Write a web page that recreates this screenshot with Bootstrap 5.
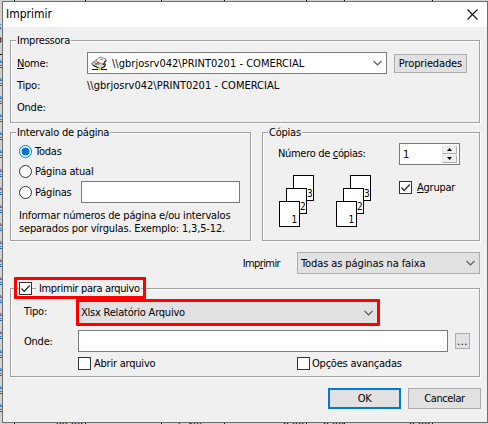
<!DOCTYPE html>
<html lang="pt-BR">
<head>
    <meta charset="UTF-8" />
    <meta name="viewport" content="width=device-width, initial-scale=1.0"/>
    <title>Imprimir</title>
    <link href="https://cdn.jsdelivr.net/npm/bootstrap@5.3.0/dist/css/bootstrap.min.css" rel="stylesheet"/>
    <style>
        body {
            width: 488px;
            height: 424px;
            background: #d2d2d2;
            color: #000;
            font-family: "DejaVu Sans Condensed", "DejaVu Sans", sans-serif;
            font-stretch: condensed;
            font-size: 11px;
            line-height: 13px;
            letter-spacing: -0.22px;
            white-space: nowrap;
        }

        u { text-underline-offset: 1px; }

        /* spreadsheet behind the dialog */
        .sheet-lines { inset: 0; }

        .sheet-rows {
            left: -4px;
            top: 54px;
            width: 8px;
            color: #0f62b0;
            line-height: 18.1px;
        }

        .sheet-head {
            left: -4px;
            top: 20px;
            width: 8px;
            height: 35px;
            border-bottom: 1px solid #000;
        }

        .sheet-values {
            left: 0;
            top: 420px;
            width: 432px;
        }

        .sheet-values span { text-align: right; }
        .col-a { width: 83px; }
        .col-b { width: 122px; }
        .col-c { width: 99px; }
        .col-d { width: 40px; }
        .col-e { width: 86px; }

        .dialog-window {
            left: 2px;
            top: 1px;
            width: 486px;
            height: 422px;
            background: #f0f0f0;
            border: 1px solid #6e6e6e;
        }

        .title-bar {
            height: 25px;
            padding: 0 9px 0 3px;
            background: #fff;
            font-size: 12px;
            letter-spacing: 0;
        }

        .dialog-content { padding: 13px 7px 0; }

        .group-box {
            border: 1px solid #a0a0a0;
            box-shadow: 1px 1px 0 #fff, inset 1px 1px 0 #fff;
        }

        .group-title {
            width: fit-content;
            height: 16px;
            margin: -8px 0 0 5px;
            padding: 1px;
            background: #f0f0f0;
        }

        .box-printer { height: 83px; margin-bottom: 9px; }
        .box-printer .line-22 { margin-left: 6px; }
        .box-printer .group-title { margin-bottom: 3px; }
        .box-printer .field { width: 300px; padding: 0 4px 0 3px; }
        .box-printer .push { width: 73px; height: 19px; margin-left: 7px; letter-spacing: -0.12px; }
        .box-range { width: 241px; height: 109px; }
        .box-range .radio-line { height: 20px; margin-left: 8px; }
        .box-range .radio-line:nth-child(4) { height: 22px; }
        .box-range .radio-label { width: 46px; margin-left: 3px; }
        .box-range .field { width: 159px; }
        .box-range .hint { margin: 6px 0 0 8px; letter-spacing: -0.16px; }
        .box-copies { width: 218px; height: 109px; }
        .copies-body { margin: 2px 0 0 15px; }
        .copies-left { width: 121px; padding-top: 4px; letter-spacing: -0.32px; }
        .copies-left svg { display: block; margin: 15px 0 0 1px; }
        .copies-body .field { width: 61px; padding: 0 2px 0 3px; }
        .collate { margin-top: 16px; letter-spacing: -0.25px; }
        .collate-label { margin-left: 5px; }
        .box-file { height: 89px; margin-top: 14px; }
        .box-file .file-line { margin-left: 13px; }
        .box-file .field { width: 370px; }
        .box-file .push { width: 15px; height: 16px; margin-left: 7px; letter-spacing: 0.5px; }
        .options-line { margin: 5px 0 0 67px; }
        .option { width: 219px; gap: 3px; }
        .option-wide { gap: 2px; letter-spacing: -0.22px; }

        .line-22 { height: 22px; }
        .label-printer { width: 70px; }
        .label-file { width: 54px; }
        .printer-path { letter-spacing: 0.02px; }

        .field {
            height: 22px;
            background: #fff;
            border: 1px solid #7a7a7a;
        }

        .range-line { margin-top: 11px; }
        .range-label { margin-right: 17px; letter-spacing: -0.6px; }

        .field-grey {
            width: 183px;
            padding: 0 4px 0 3px;
            background: #e1e1e1;
            border-color: #adadad;
            letter-spacing: -0.1px;
        }

        .push {
            background: #e1e1e1;
            border: 1px solid #adadad;
        }

        .actions { gap: 7px; margin: 11px -1px 0 0; }
        .push-action { width: 73px; height: 21px; letter-spacing: -0.4px; }
        .push-default { border: 2px solid #0078d7; }

        .radio-dot {
            width: 13px;
            height: 13px;
            border: 1px solid #333;
            border-radius: 50%;
            background: #fff;
        }

        .radio-on {
            border-color: #0078d7;
            background: radial-gradient(circle, #0078d7 3.6px, #fff 4.3px);
        }

        .tick-box {
            width: 13px;
            height: 13px;
            border: 1px solid #333;
            background: #fff;
        }

        .tick-box svg { display: block; }

        .marked { border: 3px solid #f00; border-radius: 1px; }

        .file-heading {
            width: 132px;
            height: 22px;
            margin: -12px 0 0 3px;
            padding-left: 2px;
            letter-spacing: -0.35px;
            background: linear-gradient(#a0a0a0, #a0a0a0) 0 8px / 100% 1px no-repeat,
                        linear-gradient(#fff, #fff) 0 9px / 100% 1px no-repeat #f0f0f0;
        }

        .file-heading .heading-text {
            background: #f0f0f0;
            padding: 0 1px 0 3px;
            margin-left: 4px;
        }

        .label-type { width: 52px; padding-top: 6px; }

        .type-select {
            width: 304px;
            height: 27px;
            margin-bottom: 4px;
            padding: 0 4px 0 2px;
            background: #e1e1e1;
        }

        .spin {
            width: 15px;
            height: 8px;
            background: #f0f0f0;
            border: 1px solid #adadad;
            border-top-color: #e4e4e4;
            border-left-color: #e4e4e4;
        }

        .spin + .spin { margin-top: 1px; }

        .page-text { font-size: 10px; letter-spacing: 0; }
    </style>
</head>
<body class="position-relative overflow-hidden">
<svg class="sheet-lines position-absolute" width="488" height="424" shape-rendering="crispEdges">
    <path d="M14.5 0V424M85.5 0V424M161.5 0V424M224.5 0V424M306.5 0V424M344.5 0V424M432.5 0V424" stroke="#000"/>
</svg>
<div class="sheet-head position-absolute">s<br>o</div>
<div class="sheet-rows position-absolute">
    <u>e</u><br><u>e</u><br><u>e</u><br><u>e</u><br><u>e</u><br><u>e</u><br><u>e</u><br><u>e</u><br><u>e</u><br><u>e</u><br>
    <u>e</u><br><u>e</u><br><u>e</u><br><u>e</u><br><u>e</u><br><u>e</u><br><u>e</u><br><u>e</u><br><u>e</u><br><u>e</u>
</div>
<div class="sheet-values position-absolute d-flex">
    <span class="col-a">99,00</span><span class="col-b">5.495</span><span class="col-c">0,00</span><span class="col-d">0,00</span><span class="col-e">0,00</span>
</div>

<div class="dialog-window position-absolute">
    <div class="title-bar d-flex justify-content-between align-items-center">
        <span>Imprimir</span>
        <svg width="11" height="11" viewBox="0 0 11 11"><path d="M.5 .5l10 10M10.5 .5l-10 10" stroke="#111" stroke-width="1.1"/></svg>
    </div>

    <div class="dialog-content">
        <div class="group-box box-printer">
            <div class="group-title">Impressora</div>
            <div class="line-22 d-flex align-items-center">
                <div class="label-printer"><u>N</u>ome:</div>
                <div class="field d-flex align-items-center">
                    <svg width="17" height="15" viewBox="0 0 17 15">
                        <path d="M1 7l4-3 4 1 5 2v3l-5 3-8-4z" fill="#d8d8d8" stroke="#777"/>
                        <path d="M5 4l4-3 6 2-3 5-5-1z" fill="#fff" stroke="#888"/>
                        <path d="M12 9l3.5-5M2 9l7 4 5-2.5V8" fill="none" stroke="#111"/>
                        <path d="M9 3l3 1M3 6.5l5 2" stroke="#777"/>
                        <path d="M1 13.5h6M10 13.5h6" stroke="#111"/>
                        <path d="M7 12h3v2H7z" fill="#cc2"/>
                        <path d="M6 6h2v1.5H6z" fill="#f22"/>
                        <path d="M4 7.5h2V9H4z" fill="#3b4"/>
                    </svg>
                    <span class="printer-path ms-1 flex-grow-1">\\gbrjosrv042\PRINT0201 - COMERCIAL</span>
                    <svg width="9" height="6" viewBox="0 0 9 6"><path d="M.5 .8l4 4 4-4" fill="none" stroke="#555" stroke-width="1.2"/></svg>
                </div>
                <div class="push d-flex align-items-center justify-content-center">Propriedades</div>
            </div>
            <div class="line-22 d-flex align-items-center mt-0">
                <div class="label-printer">Tipo:</div>
                <div class="printer-path">\\gbrjosrv042\PRINT0201 - COMERCIAL</div>
            </div>
            <div class="line-22 d-flex align-items-center">Onde:</div>
        </div>

        <div class="d-flex justify-content-between">
            <div class="group-box box-range">
                <div class="group-title">Intervalo de página</div>
                <div class="radio-line d-flex align-items-center"><span class="radio-dot radio-on"></span><span class="radio-label">Todas</span></div>
                <div class="radio-line d-flex align-items-center"><span class="radio-dot"></span><span class="radio-label">Página atual</span></div>
                <div class="radio-line d-flex align-items-center">
                    <span class="radio-dot"></span><span class="radio-label">Páginas</span>
                    <div class="field"></div>
                </div>
                <div class="hint">Informar números de página e/ou intervalos<br>separados por vírgulas. Exemplo: 1,3,5-12.</div>
            </div>

            <div class="group-box box-copies">
                <div class="group-title">Cópias</div>
                <div class="copies-body d-flex">
                    <div class="copies-left">
                        <div>Número de <u>c</u>ópias:</div>
                        <svg width="93" height="54" viewBox="0 0 93 54">
                            <defs>
                                <g id="pages">
                                    <path d="M14.5 .5h20v25h-20z" fill="#fff" stroke="#000" shape-rendering="crispEdges"/>
                                    <text class="page-text" x="28" y="22">3</text>
                                    <path d="M7.5 13.5h20v25h-20z" fill="#fff" stroke="#000" shape-rendering="crispEdges"/>
                                    <text class="page-text" x="21" y="35">2</text>
                                    <path d="M.5 26.5h20v25h-20z" fill="#fff" stroke="#000" shape-rendering="crispEdges"/>
                                    <text class="page-text" x="12.5" y="48">1</text>
                                </g>
                            </defs>
                            <use href="#pages"/>
                            <use href="#pages" x="57"/>
                        </svg>
                    </div>
                    <div>
                        <div class="field d-flex align-items-center justify-content-between">
                            <span>1</span>
                            <div>
                                <div class="spin d-flex align-items-center justify-content-center"><svg width="5" height="3"><path d="M0 3L2.5 0 5 3z"/></svg></div>
                                <div class="spin d-flex align-items-center justify-content-center"><svg width="5" height="3"><path d="M0 0L2.5 3 5 0z"/></svg></div>
                            </div>
                        </div>
                        <div class="collate d-flex align-items-center">
                            <span class="tick-box"><svg width="11" height="11"><path d="M1.5 5.5l2.7 3 5.5-6" fill="none" stroke="#333" stroke-width="1.4"/></svg></span>
                            <span class="collate-label"><u>A</u>grupar</span>
                        </div>
                    </div>
                </div>
            </div>
        </div>

        <div class="range-line d-flex justify-content-end align-items-center">
            <span class="range-label">Imp<u>r</u>imir</span>
            <div class="field field-grey d-flex align-items-center justify-content-between">
                <span>Todas as páginas na faixa</span>
                <svg width="9" height="6" viewBox="0 0 9 6"><path d="M.5 .8l4 4 4-4" fill="none" stroke="#555" stroke-width="1.2"/></svg>
            </div>
        </div>

        <div class="group-box box-file">
            <div class="file-heading marked d-flex align-items-center">
                <span class="tick-box"><svg width="11" height="11"><path d="M1.5 5.5l2.7 3 5.5-6" fill="none" stroke="#333" stroke-width="1.4"/></svg></span>
                <span class="heading-text">Imprimir para arquivo</span>
            </div>
            <div class="file-line d-flex">
                <div class="label-type">Tipo:</div>
                <div class="type-select marked d-flex align-items-center justify-content-between">
                    <span>Xlsx Relatório Arquivo</span>
                    <svg width="9" height="6" viewBox="0 0 9 6"><path d="M.5 .8l4 4 4-4" fill="none" stroke="#555" stroke-width="1.2"/></svg>
                </div>
            </div>
            <div class="file-line line-22 d-flex align-items-center">
                <div class="label-file">Onde:</div>
                <div class="field"></div>
                <div class="push d-flex align-items-end justify-content-center">...</div>
            </div>
            <div class="options-line d-flex">
                <div class="option d-flex align-items-center"><span class="tick-box"></span>Abrir arquivo</div>
                <div class="option-wide d-flex align-items-center"><span class="tick-box"></span>Opções avançadas</div>
            </div>
        </div>

        <div class="actions d-flex justify-content-end">
            <div class="push push-default push-action d-flex align-items-center justify-content-center">OK</div>
            <div class="push push-action d-flex align-items-center justify-content-center">Cancelar</div>
        </div>
    </div>
</div>
<script src="https://cdn.jsdelivr.net/npm/bootstrap@5.3.0/dist/js/bootstrap.bundle.min.js"></script>
</body>
</html>
